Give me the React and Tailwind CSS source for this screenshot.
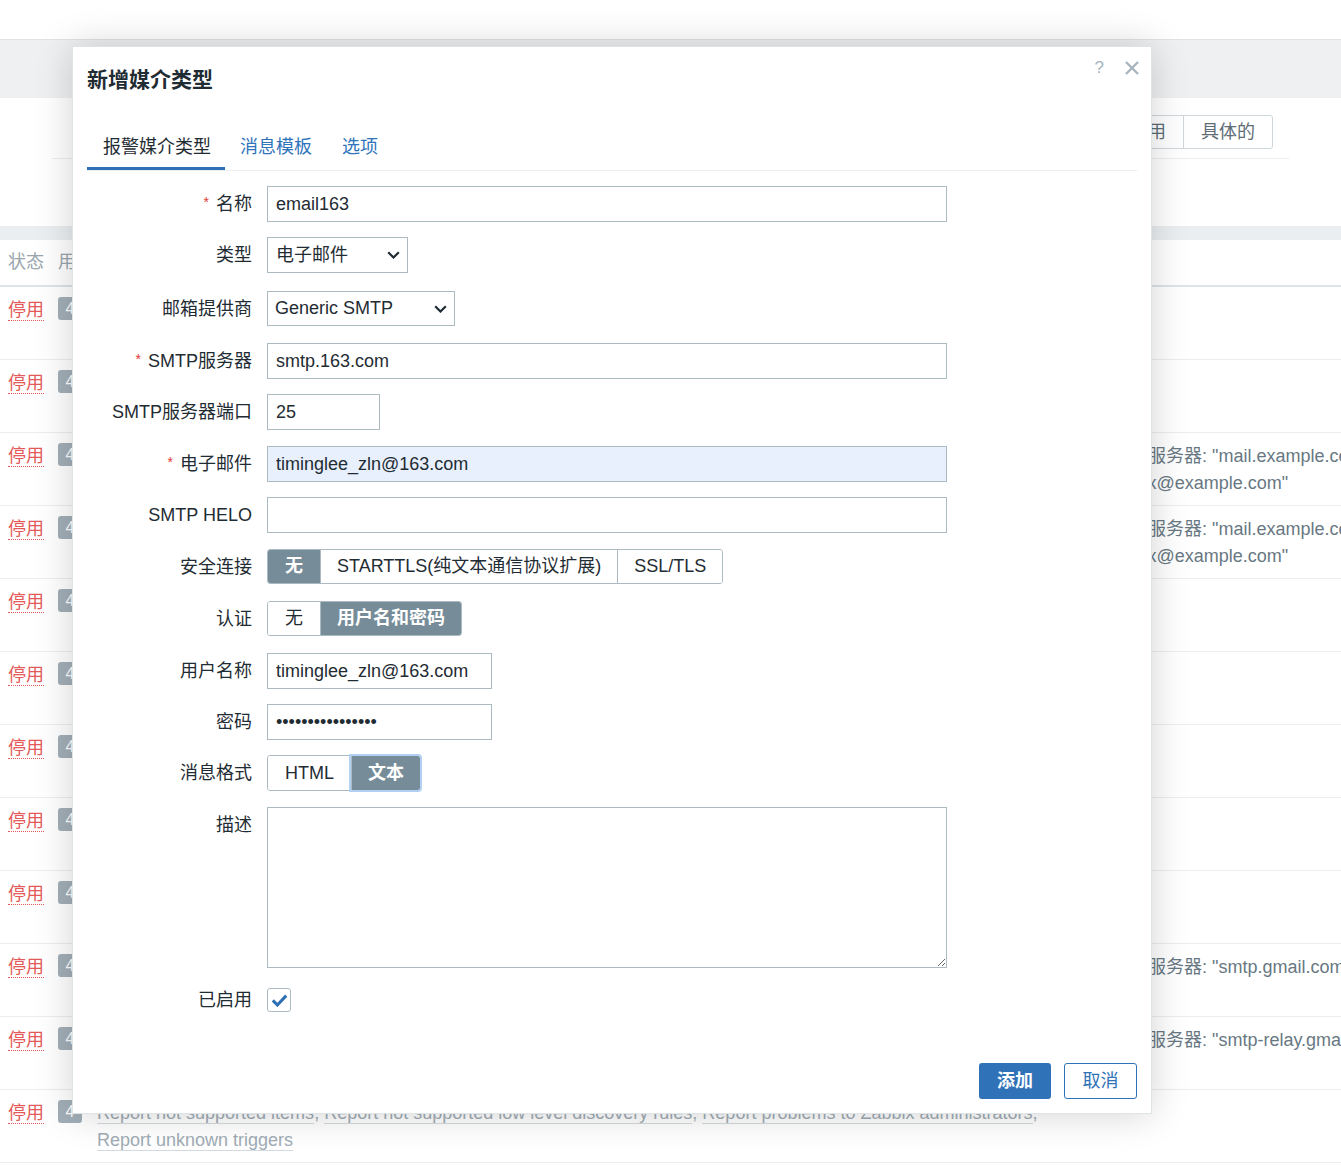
import React from "react";

const baseInput =
  "h-[36px] border border-[#acbbc2] px-[8px] text-[18px] text-[#1f2c33] outline-none font-['Liberation_Sans','Noto_Sans_CJK_SC',sans-serif]";
const inputCls = `${baseInput} bg-white`;

const Chevron = () => (
  <svg width="13" height="8" viewBox="0 0 13 8" className="shrink-0">
    <path d="M1.2 1.2l5.3 5.3 5.3-5.3" fill="none" stroke="#1f2c33" strokeWidth="2.2" />
  </svg>
);

const Field = ({ label, required, mt, top, children }) => (
  <div className={`flex gap-[15px] ${top ? "items-start" : "items-center"} ${mt}`}>
    <div
      className={`w-[165px] shrink-0 text-right text-[18px] leading-[24px] text-[#1f2c33] ${
        top ? "pt-[6px]" : ""
      }`}
    >
      {required && (
        <span className="relative -top-[3px] mr-[7px] text-[14px] text-[#e33734]">*</span>
      )}
      {label}
    </div>
    {children}
  </div>
);

const Segmented = ({ items, active, focus, h }) => (
  <div className={`flex ${h} rounded-[3px] border border-[#acbbc2] text-[18px]`}>
    {items.map((it, i) => (
      <div
        key={it}
        className={`flex items-center ${
          i > 0 ? "border-l border-[#acbbc2] px-[16px]" : "rounded-l-[2px] px-[17px]"
        } ${i === items.length - 1 ? "rounded-r-[2px]" : ""} ${
          i === active ? "bg-[#768d99] font-bold text-white" : "bg-white text-[#1f2c33]"
        } ${i === active && focus ? "relative z-10 outline-2 outline-[#b3cff1]" : ""}`}
      >
        {it}
      </div>
    ))}
  </div>
);

const rightText = {
  2: ['SMTP服务器: "mail.example.com"', '"zabbix@example.com"'],
  3: ['SMTP服务器: "mail.example.com"', '"zabbix@example.com"'],
  9: ['SMTP服务器: "smtp.gmail.com"'],
  10: ['SMTP服务器: "smtp-relay.gmail.com"'],
};

const Link = ({ children }) => (
  <span className="border-b border-[#d4dbe0]">{children}</span>
);

const Background = () => (
  <div className="w-full">
    <div className="h-[39px] bg-white" />
    <div className="h-[59px] border-t border-[#dfe3e6] bg-[#eef0f2]" />
    <div className="h-[128px] bg-white pt-[17px]">
      <div className="flex justify-end pr-[68px]">
        <div className="flex h-[34px] rounded-[3px] border border-[#cfd7dc] text-[18px] text-[#5e6c75]">
          <div className="flex items-center px-[17px]">停用</div>
          <div className="flex items-center border-l border-[#cfd7dc] px-[17px]">具体的</div>
        </div>
      </div>
      <div className="ml-[52px] mr-[52px] mt-[9px] border-t border-[#ebeef0]" />
    </div>
    <div className="h-[14px] bg-[#ebeef0]" />
    <div className="flex h-[47px] items-center border-b-2 border-[#dde3e6] text-[18px] text-[#9aa5ad]">
      <div className="w-[58px] pl-[8px]">状态</div>
      <div>用于动作</div>
    </div>
    {Array.from({ length: 12 }).map((_, i) => (
      <div
        key={i}
        className="flex h-[73px] border-b border-[#ebeef0] pt-[10px] text-[18px] leading-[27px]"
      >
        <div className="w-[58px] shrink-0 pl-[8px]">
          <span className="border-b border-dotted border-[#e45959] text-[#e45959]">停用</span>
        </div>
        <div className="w-[39px] shrink-0">
          <div className="flex h-[23px] w-[24px] items-center justify-center rounded-[3px] bg-[#a3afb8] text-[16px] text-white">
            4
          </div>
        </div>
        <div className="w-[1001px] shrink-0 text-[#a0acb5]">
          {i === 11 && (
            <>
              <div className="whitespace-nowrap">
                <Link>Report not supported items</Link>, <Link>Report not supported low level discovery rules</Link>,{" "}
                <Link>Report problems to Zabbix administrators</Link>,
              </div>
              <div>
                <Link>Report unknown triggers</Link>
              </div>
            </>
          )}
        </div>
        <div className="min-w-0 flex-1 overflow-hidden whitespace-nowrap text-[#687883]">
          {(rightText[i] || []).map((t) => (
            <div key={t}>{t}</div>
          ))}
        </div>
      </div>
    ))}
  </div>
);

const Dialog = () => (
  <div className="absolute left-[72px] top-[46px] flex h-[1068px] w-[1080px] flex-col border border-[#dfe4e7] bg-white shadow-[0_0_35px_rgba(0,0,0,0.18)]">
    <div className="relative h-[80px] px-[14px] pt-[20px]">
      <div className="text-[21px] font-bold leading-[26px] text-[#1f2c33]">新增媒介类型</div>
      <div className="absolute right-[11px] top-[11px] flex items-center gap-[20px] text-[#a7b4bc]">
        <span className="text-[17px] leading-[20px]">?</span>
        <svg width="16" height="16" viewBox="0 0 16 16">
          <path d="M2 2l12 12M14 2L2 14" stroke="#a7b4bc" strokeWidth="2.4" />
        </svg>
      </div>
    </div>

    <div className="mx-[14px] flex border-b border-[#ebeef0] text-[18px]">
      <div className="border-b-[3px] border-[#2f6fb5] pb-[8px] pl-[16px] pr-[14px] pt-[8px] leading-[24px] text-[#1f2c33]">
        报警媒介类型
      </div>
      <div className="border-b-[3px] border-transparent px-[15px] pb-[8px] pt-[8px] leading-[24px] text-[#2f74bb]">
        消息模板
      </div>
      <div className="border-b-[3px] border-transparent px-[15px] pb-[8px] pt-[8px] leading-[24px] text-[#2f74bb]">
        选项
      </div>
    </div>

    <div className="flex flex-col px-[14px]">
      <Field label="名称" required mt="mt-[15px]">
        <input readOnly value="email163" className={`${inputCls} w-[680px]`} />
      </Field>
      <Field label="类型" mt="mt-[15px]">
        <div className="flex h-[36px] w-[141px] items-center justify-between border border-[#acbbc2] pl-[8px] pr-[7px] text-[18px] text-[#1f2c33]">
          <span>电子邮件</span>
          <Chevron />
        </div>
      </Field>
      <Field label="邮箱提供商" mt="mt-[18px]">
        <div className="flex h-[35px] w-[188px] items-center justify-between border border-[#acbbc2] pl-[7px] pr-[7px] text-[18px] text-[#1f2c33]">
          <span>Generic SMTP</span>
          <Chevron />
        </div>
      </Field>
      <Field label="SMTP服务器" required mt="mt-[17px]">
        <input readOnly value="smtp.163.com" className={`${inputCls} w-[680px]`} />
      </Field>
      <Field label="SMTP服务器端口" mt="mt-[15px]">
        <input readOnly value="25" className={`${inputCls} w-[113px]`} />
      </Field>
      <Field label="电子邮件" required mt="mt-[16px]">
        <input
          readOnly
          value="timinglee_zln@163.com"
          className={`${baseInput} w-[680px] bg-[#e8f0fe]`}
        />
      </Field>
      <Field label="SMTP HELO" mt="mt-[15px]">
        <input readOnly value="" className={`${inputCls} w-[680px]`} />
      </Field>
      <Field label="安全连接" mt="mt-[16px]">
        <Segmented h="h-[35px]" items={["无", "STARTTLS(纯文本通信协议扩展)", "SSL/TLS"]} active={0} />
      </Field>
      <Field label="认证" mt="mt-[17px]">
        <Segmented h="h-[35px]" items={["无", "用户名和密码"]} active={1} />
      </Field>
      <Field label="用户名称" mt="mt-[17px]">
        <input readOnly value="timinglee_zln@163.com" className={`${inputCls} w-[225px]`} />
      </Field>
      <Field label="密码" mt="mt-[15px]">
        <input readOnly value="••••••••••••••••" className={`${inputCls} w-[225px]`} />
      </Field>
      <Field label="消息格式" mt="mt-[15px]">
        <Segmented h="h-[36px]" items={["HTML", "文本"]} active={1} focus />
      </Field>
      <Field label="描述" top mt="mt-[16px]">
        <textarea readOnly className={`${inputCls} h-[161px] w-[680px]`} />
      </Field>
      <Field label="已启用" mt="mt-[20px]">
        <div className="flex h-[24px] w-[24px] items-center justify-center rounded-[3px] border border-[#acbbc2] bg-white">
          <svg width="17" height="13" viewBox="0 0 17 13">
            <path d="M1.8 6.4l4.6 4.6 8.8-9.4" fill="none" stroke="#2f6fb5" strokeWidth="3" />
          </svg>
        </div>
      </Field>
    </div>

    <div className="mt-auto flex justify-end gap-[13px] px-[14px] pb-[14px] text-[18px]">
      <div className="flex h-[36px] w-[72px] items-center justify-center rounded-[3px] bg-[#2f72b7] font-bold text-white">
        添加
      </div>
      <div className="flex h-[36px] w-[73px] items-center justify-center rounded-[3px] border border-[#2f72b7] bg-white text-[#2f72b7]">
        取消
      </div>
    </div>
  </div>
);

export default function App() {
  return (
    <div className="relative h-[1166px] w-full overflow-hidden bg-white font-['Liberation_Sans','Noto_Sans_CJK_SC',sans-serif]">
      <Background />
      <Dialog />
    </div>
  );
}
